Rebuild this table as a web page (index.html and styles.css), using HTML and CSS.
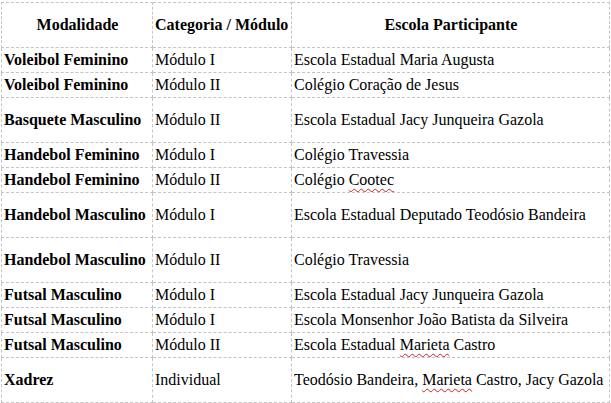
FILE: index.html
```html
<!DOCTYPE html>
<html lang="pt">
<head>
<meta charset="utf-8">
<title>Modalidades</title>
<link rel="stylesheet" href="styles.css">
</head>
<body>
<table class="grade">
  <colgroup>
    <col class="c-mod">
    <col class="c-cat">
    <col class="c-esc">
  </colgroup>
  <thead>
    <tr class="alto">
      <th class="centro">Modalidade</th>
      <th>Categoria / Módulo</th>
      <th class="centro">Escola Participante</th>
    </tr>
  </thead>
  <tbody>
    <tr><td class="mod">Voleibol Feminino</td><td>Módulo I</td><td>Escola Estadual Maria Augusta</td></tr>
    <tr><td class="mod">Voleibol Feminino</td><td>Módulo II</td><td>Colégio Coração de Jesus</td></tr>
    <tr class="alto"><td class="mod">Basquete Masculino</td><td>Módulo II</td><td>Escola Estadual Jacy Junqueira Gazola</td></tr>
    <tr><td class="mod">Handebol Feminino</td><td>Módulo I</td><td>Colégio Travessia</td></tr>
    <tr><td class="mod">Handebol Feminino</td><td>Módulo II</td><td>Colégio <span class="erro">Cootec</span></td></tr>
    <tr class="alto"><td class="mod">Handebol Masculino</td><td>Módulo I</td><td>Escola Estadual Deputado Teodósio Bandeira</td></tr>
    <tr class="alto"><td class="mod">Handebol Masculino</td><td>Módulo II</td><td>Colégio Travessia</td></tr>
    <tr><td class="mod">Futsal Masculino</td><td>Módulo I</td><td>Escola Estadual Jacy Junqueira Gazola</td></tr>
    <tr><td class="mod">Futsal Masculino</td><td>Módulo I</td><td>Escola Monsenhor João Batista da Silveira</td></tr>
    <tr><td class="mod">Futsal Masculino</td><td>Módulo II</td><td>Escola Estadual <span class="erro">Marieta</span> Castro</td></tr>
    <tr class="alto"><td class="mod">Xadrez</td><td>Individual</td><td>Teodósio Bandeira, <span class="erro">Marieta</span> Castro, Jacy Gazola</td></tr>
  </tbody>
</table>
</body>
</html>
```
FILE: styles.css
```css
html, body {
  margin: 0;
  padding: 0;
  background: #ffffff;
}

body {
  padding: 2px 0 0 1px;
  font-family: "Liberation Serif", "Times New Roman", serif;
  font-size: 16px;
  color: #000000;
}

.grade {
  border-collapse: collapse;
  table-layout: fixed;
  width: 608px;
}

.c-mod { width: 151px; }
.c-cat { width: 139px; }
.c-esc { width: 318px; }

.grade th,
.grade td {
  border: 1px dashed #c4c4c4;
  padding: 0 1px 0 2px;
  text-align: left;
  vertical-align: middle;
  white-space: nowrap;
  overflow: hidden;
  line-height: 18px;
}

.grade tr {
  height: 25px;
}

.grade tr.alto {
  height: 45px;
}

.grade th {
  font-weight: bold;
}

.grade th.centro {
  text-align: center;
}

.mod {
  font-weight: bold;
}

.erro {
  text-decoration: underline wavy #d02020;
  text-decoration-thickness: 1px;
  text-underline-offset: 3px;
}
```
